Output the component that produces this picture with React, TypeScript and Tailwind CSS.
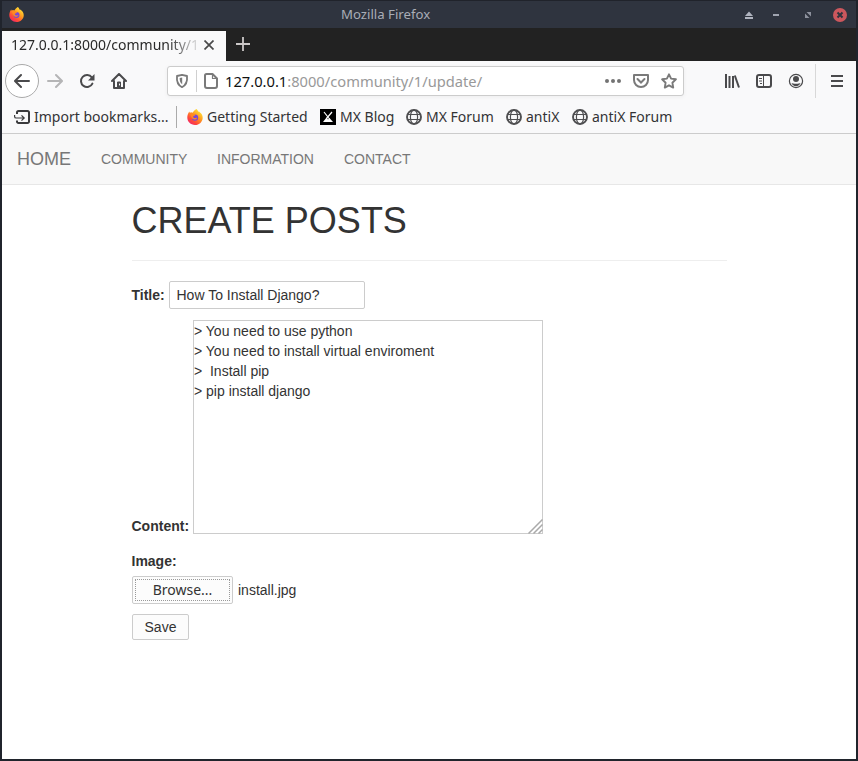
import React from "react";

const noto = "font-['Noto_Sans','Open_Sans',sans-serif]";
const arial = "font-['Liberation_Sans',Arial,sans-serif]";

function FirefoxLogo({ size }: { size: number }) {
  return (
    <svg width={size} height={size} viewBox="0 0 16 16" className="shrink-0">
      <defs>
        <linearGradient id="flame" x1="0.85" y1="0.1" x2="0.2" y2="0.95">
          <stop offset="0" stopColor="#ffe838" />
          <stop offset="0.4" stopColor="#ff9a20" />
          <stop offset="0.75" stopColor="#ff4a38" />
          <stop offset="1" stopColor="#f02868" />
        </linearGradient>
      </defs>
      <path
        fill="url(#flame)"
        d="M9.3 0c1.1.6 1.6 1.6 1.8 2.6 1-.1 1.6.4 1.9.9 1.800 1.300 2.700 3.100 2.700 5.200C15.700 12.800 12.300 16 8 16S.3 12.800.3 8.600C.3 6.500 1 4.500 2.300 2.600c.2.600.4 1 .7 1.300.9-.5 1.800-.6 2.700-.2C6.600 2.200 8 .9 9.300 0z"
      />
      <circle cx="8" cy="8.600" r="3.200" fill="#7847d8" />
      <path fill="#ff8a22" d="M2.900 4c1.700-.5 2.900 0 3.500.900 1.200-.100 1.900.300 2.100.900-.400.900-1.700 1-2.200 1.500-.500.600.100 1.500.900 1.700 1.200.300 1.900-.500 2.900-.100-.500 1.300-2 1.900-3.500 1.400C4.200 9.600 3.900 7 2.900 4z" />
    </svg>
  );
}

function Globe() {
  return (
    <svg width="16" height="16" viewBox="0 0 16 16" fill="none" stroke="#4f4f51" className="shrink-0">
      <circle cx="8" cy="8" r="7" strokeWidth="1.900" />
      <ellipse cx="8" cy="8" rx="3.600" ry="7" strokeWidth="1.200" />
      <path d="M1.800 5.500h12.400M1.800 10.500h12.400" strokeWidth="1.200" />
    </svg>
  );
}

function Bookmark({ icon, label, width }: { icon: React.ReactNode; label: string; width: string }) {
  return (
    <div className={`flex shrink-0 items-center gap-1 ${width}`}>
      {icon}
      <span>{label}</span>
    </div>
  );
}

function TitleBar() {
  return (
    <div className="flex h-7 items-center border-t border-[#20232b] bg-[#2f343f] pl-[7px]">
      <FirefoxLogo size={15} />
      <span className={`ml-[317px] w-[403px] text-[13.200px] leading-none text-[#a9adb6] ${noto}`}>Mozilla Firefox</span>
      <svg width="10" height="10" viewBox="0 0 10 10" fill="#b0b4bf">
        <path d="M5 1.500 9 6H1zM1 7h8v2H1z" />
      </svg>
      <svg width="6" height="10" viewBox="0 0 6 10" className="ml-[19px]">
        <path d="M0 4h6v2H0z" fill="#a0a4b0" />
      </svg>
      <svg width="6" height="6" viewBox="0 0 6 6" fill="#8d919d" className="ml-[26px]">
        <path d="M1.500 0H6v4.500zM0 1.500V6h4.500z" />
      </svg>
      <svg width="14" height="14" viewBox="0 0 14 14" className="ml-[22px]">
        <circle cx="7" cy="7" r="7" fill="#cc575d" />
        <path d="m4.500 4.500 5 5m0-5-5 5" stroke="#2f343f" strokeWidth="2" />
      </svg>
    </div>
  );
}

function TabStrip() {
  return (
    <div className="flex h-[33px] bg-[#222] pt-[3px]">
      <div className="flex h-[30px] w-[224px] items-center bg-[#f9f9fa] pl-[9px]">
        <div className={`-mt-[3px] w-[187px] whitespace-nowrap text-sm leading-5 text-[#2a2a2a] [mask-image:linear-gradient(to_right,black_84%,transparent_102%)] ${noto}`}>
          127.0.0.1:8000/community/1
        </div>
        <svg width="10" height="10" viewBox="0 0 10 10" className="-mt-[2px] ml-[6px]" stroke="#4a4a4a" strokeWidth="1.700">
          <path d="m.5.5 9 9m0-9-9 9" />
        </svg>
      </div>
      <svg width="14" height="14" viewBox="0 0 14 14" className="ml-[10px] mt-[6px]" stroke="#ccc8c8" strokeWidth="1.800">
        <path d="M7 0v14M0 7h14" />
      </svg>
    </div>
  );
}

function UrlBar() {
  return (
    <div className="ml-10 flex h-[30px] w-[517px] shrink-0 items-center rounded-[3px] border border-[#ccc] bg-white pl-[7px] shadow-[0_1px_4px_rgba(0,0,0,0.05)]">
      <svg width="14" height="16" viewBox="0 0 14 16" fill="none" stroke="#7a7a7a" strokeWidth="1.800">
        <path d="M7 1.800 12 3c.4 4-.500 9-5 11.200C2.500 12 1.600 7 2 3z" strokeLinejoin="round" />
        <path d="M7.200 4.500v6.800C5 9.800 4.600 7.500 4.700 5z" fill="#7a7a7a" stroke="none" />
      </svg>
      <div className="ml-[7px] h-[22px] w-px bg-[#d0d0d0]" />
      <svg width="16" height="16" viewBox="0 0 16 16" fill="none" stroke="#7a7a7a" strokeWidth="2" strokeLinejoin="round" className="ml-[6px]">
        <path d="M3.500 1h6L14 5.500V13a2 2 0 0 1-2 2H4a2 2 0 0 1-2-2V2.500A1.500 1.500 0 0 1 3.500 1z" />
        <path d="M9.500 1v4.500H14" strokeWidth="1.200" />
      </svg>
      <div className={`ml-[6px] w-[380px] text-[14.690px] leading-5 text-[#999] ${noto}`}>
        <span className="text-[#111]">127.0.0.1</span>:8000/community/1/update/
      </div>
      <svg width="16" height="16" viewBox="0 0 16 16" fill="#737373">
        <circle cx="2" cy="8" r="2" />
        <circle cx="8" cy="8" r="2" />
        <circle cx="14" cy="8" r="2" />
      </svg>
      <svg width="16" height="16" viewBox="0 0 16 16" fill="none" stroke="#7a7a7a" strokeWidth="2" className="ml-3">
        <path d="M1 2h14v5A7 7 0 0 1 1 7z" strokeLinejoin="round" />
        <path d="m4.500 6 3.500 3.500L11.500 6" strokeLinecap="round" />
      </svg>
      <svg width="16" height="16" viewBox="0 0 16 16" fill="none" stroke="#7a7a7a" strokeWidth="1.900" strokeLinejoin="round" className="ml-3">
        <path d="m8 1.300 2.100 4.300 4.800.7-3.500 3.400.8 4.900L8 12.300l-4.200 2.300.8-4.900L1.100 6.300l4.800-.7z" />
      </svg>
    </div>
  );
}

function Toolbar() {
  return (
    <div className="flex h-10 items-center bg-[#f9f9fa] pl-[3px]">
      <div className="flex h-[34px] w-[34px] shrink-0 items-center justify-center rounded-full border border-[#aaa] bg-white">
        <svg width="16" height="16" viewBox="0 0 16 16" fill="none" stroke="#4a4a4c" strokeWidth="2" strokeLinecap="round" strokeLinejoin="round">
          <path d="M15 8H1.500M7 2 1 8l6 6" />
        </svg>
      </div>
      <svg width="16" height="16" viewBox="0 0 16 16" fill="none" stroke="#b5b5b6" strokeWidth="2" strokeLinecap="round" strokeLinejoin="round" className="ml-2 shrink-0">
        <path d="M1 8h13.500M9 2l6 6-6 6" />
      </svg>
      <svg width="16" height="16" viewBox="0 0 16 16" fill="none" stroke="#4a4a4c" strokeWidth="2" className="ml-4 shrink-0">
        <path d="M12.800 4.400A6 6 0 1 0 13.400 10.600" strokeLinecap="round" />
        <path d="M15.500 1v6.500H9z" fill="#4a4a4c" stroke="none" />
      </svg>
      <svg width="16" height="16" viewBox="0 0 16 16" fill="none" stroke="#4a4a4c" strokeWidth="2" strokeLinecap="round" strokeLinejoin="round" className="ml-4 shrink-0">
        <path d="M1 8l7-7 7 7M3 8v7h10V8" />
        <path d="M6.500 15V9h3v6" fill="#4a4a4c" strokeWidth="1" />
        <path d="M8.500 11v1" stroke="#f9f9fa" strokeWidth="1" />
      </svg>
      <UrlBar />
      <svg width="16" height="16" viewBox="0 0 16 16" fill="none" stroke="#4a4a4c" strokeWidth="2" className="ml-10 shrink-0">
        <path d="M2 1v14M5.500 3v12M9 3v12" />
        <path d="m10.800 2.500 4.200 12" />
      </svg>
      <svg width="16" height="16" viewBox="0 0 16 16" fill="none" stroke="#4a4a4c" className="ml-4 shrink-0">
        <rect x="1" y="2" width="14" height="12" rx="2" strokeWidth="2" />
        <path d="M7.500 2v12" strokeWidth="1" />
        <path d="M3 5.500h3M3 8h3M4 10.500h2" strokeWidth="1" />
      </svg>
      <svg width="16" height="16" viewBox="0 0 16 16" fill="#4a4a4c" className="ml-4 shrink-0">
        <circle cx="8" cy="8" r="6.600" fill="none" stroke="#4a4a4c" strokeWidth="1.200" />
        <circle cx="8" cy="6" r="3" />
        <path d="M3.500 10c1 1 8 1 9 0-.5 2-2.500 3.200-4.500 3.200S4 12 3.500 10z" />
      </svg>
      <div className="ml-[11px] h-[34px] w-px shrink-0 bg-[#d8d8d8]" />
      <svg width="16" height="16" viewBox="0 0 16 16" stroke="#4a4a4c" strokeWidth="2" className="ml-[13px] shrink-0">
        <path d="M2 3h12M2 8h12M2 13h12" />
      </svg>
    </div>
  );
}

function BookmarksBar() {
  return (
    <div className={`flex h-[33px] items-center whitespace-nowrap border-b border-[#ccc] bg-[#f9f9fa] pb-px pl-3 text-sm leading-5 text-[#333335] ${noto}`}>
      <Bookmark
        width="w-[162px]"
        label="Import bookmarks..."
        icon={
          <svg width="16" height="16" viewBox="0 0 16 16" fill="none" stroke="#3a3a3c" className="shrink-0">
            <path d="M3 5V3.500a1.500 1.500 0 0 1 1.500-1.500h9A1.500 1.500 0 0 1 15 3.500v9a1.500 1.500 0 0 1-1.500 1.500h-9A1.500 1.500 0 0 1 3 12.500v-1" strokeWidth="2" />
            <path d="M.6 6v1.400A1.600 1.600 0 0 0 2.200 9H10M7.500 6.300 10.200 9l-2.700 2.700" strokeWidth="1.200" />
          </svg>
        }
      />
      <div className="mr-[10px] h-[22px] w-px bg-[#aaa]" />
      <Bookmark width="w-[133px]" label="Getting Started" icon={<FirefoxLogo size={16} />} />
      <Bookmark
        width="w-[86px]"
        label="MX Blog"
        icon={
          <svg width="16" height="16" viewBox="0 0 16 16" className="shrink-0">
            <path d="M0 0h16v16H0z" fill="#000" />
            <path d="m4 3 5.500 7M12 3 6.500 9.500" stroke="#fff" strokeWidth="1.200" />
            <path d="m3 13 3.500-4.500L8 10.500l1.500-1.500L13 13z" fill="#fff" />
          </svg>
        }
      />
      <Bookmark width="w-[100px]" label="MX Forum" icon={<Globe />} />
      <Bookmark width="w-[66px]" label="antiX" icon={<Globe />} />
      <Bookmark width="w-[110px]" label="antiX Forum" icon={<Globe />} />
    </div>
  );
}

function Page() {
  return (
    <div className={`flex-1 bg-white text-sm leading-5 text-[#333] ${arial}`}>
      <nav className="flex h-[51px] items-center border-b border-[#e7e7e7] bg-[#f8f8f8] pl-[15px] text-[#777]">
        <a className="w-[84px] text-lg leading-5">HOME</a>
        <a className="w-[116px]">COMMUNITY</a>
        <a className="w-[127px]">INFORMATION</a>
        <a>CONTACT</a>
      </nav>
      <main className="ml-[130px] w-[595px]">
        <h1 className="border-b border-[#eee] pb-5 pt-4 text-[36px] leading-[39px] -indent-[0.5px]">CREATE POSTS</h1>
        <form>
          <div className="mt-5 flex h-7 items-center">
            <label className="w-[37px] font-bold -indent-[0.5px]">Title:</label>
            <input className="h-7 w-[196px] rounded-[2px] border border-[#ccc] px-[6.500px] outline-none" defaultValue="How To Install Django?" />
          </div>
          <div className="mt-[11px] flex items-end">
            <label className="-mb-[2px] w-[61px] font-bold -indent-[0.5px]">Content:</label>
            <div className="relative h-[214px] w-[350px]">
              <textarea
                className="block h-full w-full resize-none border border-[#ccc] p-0 outline-none"
                defaultValue={"> You need to use python\n> You need to install virtual enviroment\n>  Install pip\n> pip install django"}
              />
              <svg width="15" height="15" viewBox="0 0 15 15" stroke="#aaa" strokeWidth="1.500" className="absolute bottom-0 right-0">
                <path d="M.5 14.500l14-14M5.500 14.500l9-9M10.500 14.500l4-4" />
              </svg>
            </div>
          </div>
          <label className="mt-[17px] block font-bold -indent-[0.5px]">Image:</label>
          <div className="mt-[5px] flex items-center">
            <button type="button" className={`h-7 w-[101px] rounded-[2px] border border-[#ccc] bg-[#fcfcfc] p-[2px] ${noto}`}>
              <span className="flex h-full items-center justify-center border border-dotted border-[#999]">Browse...</span>
            </button>
            <span className="ml-[5px]">install.jpg</span>
          </div>
          <button type="button" className={`mt-[10px] block h-[26px] w-[57px] rounded-[2px] border border-[#ccc] bg-[#fcfcfc] ${arial}`}>Save</button>
        </form>
      </main>
    </div>
  );
}

export default function App() {
  return (
    <div className="flex h-[761px] w-[858px] flex-col overflow-hidden border-x-2 border-b-2 border-[#20242c]">
      <TitleBar />
      <TabStrip />
      <Toolbar />
      <BookmarksBar />
      <Page />
    </div>
  );
}
